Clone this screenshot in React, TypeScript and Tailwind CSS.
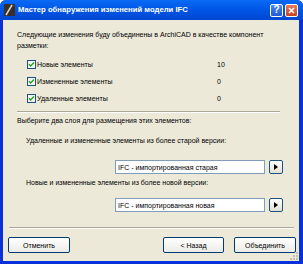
import React from 'react';

const font = { fontFamily: '"Liberation Sans", Arial, sans-serif' };

function Check() {
  return (
    <svg width="9" height="9" viewBox="0 0 9 9" className="shrink-0">
      <rect x="0.5" y="0.5" width="8" height="8" fill="#f4f4ef" stroke="#1c5180" />
      <path d="M2 4.3 L3.6 6 L7 2.6" stroke="#21a121" strokeWidth="1.4" fill="none" />
    </svg>
  );
}

function Sep({ className }: { className: string }) {
  return <div className={`h-[2px] border-t border-[#aca899] border-b border-b-white ${className}`} />;
}

function XpButton({ label, className }: { label: string; className: string }) {
  return (
    <div
      className={`h-[16px] rounded-[2px] border border-[#003c74] bg-gradient-to-b from-white to-[#ecebe6] flex items-center justify-center text-[7px] text-black ${className}`}
    >
      {label}
    </div>
  );
}

function LayerRow({ value }: { value: string }) {
  return (
    <div className="flex items-center ml-[112px]">
      <div className="w-[150px] h-[14px] bg-white border border-[#7f9db9] flex items-center pl-[2px] text-[7px] text-black">
        {value}
      </div>
      <div className="ml-[4px] w-[14px] h-[14px] rounded-[2px] border border-[#1c5180] bg-gradient-to-b from-white to-[#e3e1d6] flex items-center justify-center">
        <svg width="4" height="6" viewBox="0 0 4 6">
          <path d="M0 0 L4 3 L0 6 Z" fill="#000" />
        </svg>
      </div>
    </div>
  );
}

export default function App() {
  const items = [
    { name: 'Новые элементы', n: '10' },
    { name: 'Измененные элементы', n: '0' },
    { name: 'Удаленные элементы', n: '0' },
  ];
  return (
    <div className="w-[303px] h-[264px] bg-[#0831d9] flex flex-col rounded-t-[6px] overflow-hidden" style={font}>
      {/* title bar */}
      <div className="h-[20px] shrink-0 flex items-center bg-gradient-to-b from-[#0a6af6] via-[#0055e5] to-[#0047d0] pl-[4px] pr-[5px]">
        <svg width="11" height="12" viewBox="0 0 11 12" className="shrink-0">
          <rect x="0" y="0" width="11" height="12" fill="#3a2f28" />
          <path d="M2 11 L8 1" stroke="#d8d2c8" strokeWidth="1.5" />
          <path d="M8 1 L9.5 2" stroke="#8a7a68" strokeWidth="1" />
        </svg>
        <span className="ml-[3px] text-white font-bold text-[7.7px] whitespace-nowrap">
          Мастер обнаружения изменений модели IFC
        </span>
        <div className="ml-auto flex gap-[2px]">
          <div className="w-[13px] h-[13px] rounded-[2px] border border-white bg-gradient-to-b from-[#4a86f5] to-[#2259d6] flex items-center justify-center text-white font-bold text-[10px] leading-none">
            ?
          </div>
          <div className="w-[13px] h-[13px] rounded-[2px] border border-white bg-gradient-to-b from-[#e87a5a] to-[#c9401c] flex items-center justify-center">
            <svg width="7" height="7" viewBox="0 0 7 7">
              <path d="M1 1 L6 6 M6 1 L1 6" stroke="#fff" strokeWidth="1.6" />
            </svg>
          </div>
        </div>
      </div>
      {/* body */}
      <div className="flex-1 ml-[3px] mr-[4px] mb-[3px] bg-[#ece9d8] flex flex-col text-black text-[7px] leading-[11px] relative">
        <p className="ml-[14px] mt-[9px] whitespace-nowrap">
          Следующие изменения буду объединены в ArchiCAD в качестве компонент
          <br />
          разметки:
        </p>
        <div className="mt-[9px] flex flex-col gap-[8px]">
          {items.map((it) => (
            <div key={it.name} className="flex items-center h-[9px] ml-[24px]">
              <Check />
              <span className="ml-[1px] w-[180px]">{it.name}</span>
              <span>{it.n}</span>
            </div>
          ))}
        </div>
        <Sep className="mt-[8px] ml-[14px] w-[263px]" />
        <div className="ml-[14px] mt-[2px]">Выберите два слоя для размещения этих элементов:</div>
        <div className="ml-[23px] mt-[9px]">Удаленные и измененные элементы из более старой версии:</div>
        <div className="mt-[14px]">
          <LayerRow value="IFC - импортированная старая" />
        </div>
        <div className="ml-[23px] mt-[3px]">Новые и измененные элементы из более новой версии:</div>
        <div className="mt-[10px]">
          <LayerRow value="IFC - импортированная новая" />
        </div>
        <Sep className="mt-[15px] ml-[6px] w-[285px]" />
        <div className="mt-[8px] flex items-center ml-[5px]">
          <XpButton label="Отменить" className="w-[62px]" />
          <XpButton label="< Назад" className="w-[61px] ml-[93px]" />
          <XpButton label="Объединить" className="w-[62px] ml-[10px]" />
        </div>
        <svg width="8" height="8" viewBox="0 0 8 8" className="absolute right-[1px] bottom-[1px]">
          {[
            [6, 6], [6, 3], [3, 6], [6, 0], [3, 3], [0, 6],
          ].map(([x, y]) => (
            <rect key={`${x}-${y}`} x={x} y={y} width="2" height="2" fill="#c3c0b1" />
          ))}
        </svg>
      </div>
    </div>
  );
}
